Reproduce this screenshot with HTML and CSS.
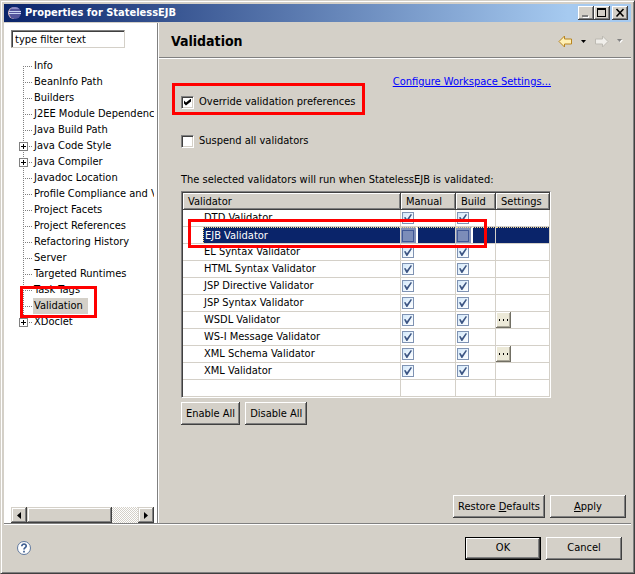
FILE: index.html
```html
<!DOCTYPE html>
<html lang="en">
<head>
  <meta charset="UTF-8">
  <meta name="viewport" content="width=device-width, initial-scale=1.0">
  <title>Properties for StatelessEJB</title>
  <link rel="stylesheet" href="styles.css">
</head>
<body>
  <div class="window">
    <header class="titlebar">
      <svg class="app-icon" width="16" height="16" viewBox="0 0 16 16" aria-hidden="true">
        <path d="M8 2a6 6 0 0 0 0 12z" fill="#e0bfc4"/>
        <circle cx="9" cy="8" r="6" fill="#54559b"/>
        <path d="M4.500 4a6 6 0 0 1 9 0z" fill="#8c8cc6"/>
        <path d="M3 6.500h12M3 8.500h12" stroke="#c9d4f2"/>
      </svg>
      <span class="title">Properties for StatelessEJB</span>
      <div class="window-buttons">
        <button class="window-button" aria-label="Minimize"><svg width="12" height="10" shape-rendering="crispEdges"><path d="M3 8h6v2H3z" fill="#fff"/><path d="M2 7h6v2H2z" fill="#808080"/></svg></button>
        <button class="window-button" aria-label="Maximize"><svg width="12" height="10" shape-rendering="crispEdges"><path d="M1 0h9v9H1zM2 2v6h7V2z" fill-rule="evenodd"/></svg></button>
        <button class="window-button close" aria-label="Close"><svg width="12" height="10"><path d="M2.500 1l7 7.500M9.500 1l-7 7.500" stroke="#000" stroke-width="1.600"/></svg></button>
      </div>
    </header>

    <main class="main">
      <nav class="sidebar">
        <input class="filter" type="text" value="type filter text" aria-label="Filter">
        <ul class="tree">
          <li><span>Info</span></li>
          <li><span>BeanInfo Path</span></li>
          <li><span>Builders</span></li>
          <li><span>J2EE Module Dependenci</span></li>
          <li><span>Java Build Path</span></li>
          <li><button class="expand" aria-label="Expand Java Code Style"></button><span>Java Code Style</span></li>
          <li><button class="expand" aria-label="Expand Java Compiler"></button><span>Java Compiler</span></li>
          <li><span>Javadoc Location</span></li>
          <li><span>Profile Compliance and Va</span></li>
          <li><span>Project Facets</span></li>
          <li><span>Project References</span></li>
          <li><span>Refactoring History</span></li>
          <li><span>Server</span></li>
          <li><span>Targeted Runtimes</span></li>
          <li><span>Task Tags</span></li>
          <li class="selected"><span>Validation</span><i class="mark mark-tree"></i></li>
          <li><button class="expand" aria-label="Expand XDoclet"></button><span>XDoclet</span></li>
        </ul>
        <div class="scrollbar">
          <button class="scroll-arrow" aria-label="Scroll left"><svg width="4" height="7"><path d="M4 0v7L0 3.500z"/></svg></button>
          <div class="thumb"></div>
          <div class="track"></div>
          <button class="scroll-arrow" aria-label="Scroll right"><svg width="4" height="7"><path d="M0 0v7l4-3.500z"/></svg></button>
        </div>
      </nav>

      <section class="page">
        <div class="page-header">
          <h1>Validation</h1>
          <div class="history">
            <button aria-label="Back"><svg width="15" height="13" viewBox="0 0 15 13"><path d="M1 6.500L6.500 1v3H13.500v5H6.500v3z" fill="#fff0b5" stroke="#b9851f"/></svg></button>
            <button aria-label="Back history"><svg width="5" height="3"><path d="M0 0h5L2.500 3z"/></svg></button>
            <button aria-label="Forward" disabled><svg width="15" height="13" viewBox="0 0 15 13"><path d="M14 6.500L8.500 1v3H1.500v5H8.500v3z" fill="#f0eeea" stroke="#bdbab3"/></svg></button>
            <button aria-label="Forward history" disabled><svg width="6" height="4"><path d="M1 1h5L3.500 4z" fill="#fff"/><path d="M0 0h5L2.500 3z" fill="#808080"/></svg></button>
          </div>
        </div>

        <div class="content">
          <a class="configure" href="#">Configure Workspace Settings...</a>
          <div class="option override">
            <input type="checkbox" class="check" id="override" checked>
            <label for="override">Override validation preferences</label>
            <i class="mark mark-override"></i>
          </div>
          <div class="option">
            <input type="checkbox" class="check" id="suspend">
            <label for="suspend">Suspend all validators</label>
          </div>

          <p class="caption" id="caption">The selected validators will run when StatelessEJB is validated:</p>
          <div class="table-frame">
            <table aria-labelledby="caption">
              <thead>
                <tr><th>Validator</th><th class="col-manual">Manual</th><th class="col-build">Build</th><th class="col-settings">Settings</th></tr>
              </thead>
              <tbody>
                <tr><td>DTD Validator</td><td><input type="checkbox" aria-label="DTD manual" checked></td><td><input type="checkbox" aria-label="DTD build" checked></td><td></td></tr>
                <tr class="current"><td><span>EJB Validator</span><i class="mark mark-row"></i></td><td><input type="checkbox" aria-label="EJB manual"></td><td><input type="checkbox" aria-label="EJB build"></td><td></td></tr>
                <tr><td>EL Syntax Validator</td><td><input type="checkbox" aria-label="EL manual" checked></td><td><input type="checkbox" aria-label="EL build" checked></td><td></td></tr>
                <tr><td>HTML Syntax Validator</td><td><input type="checkbox" aria-label="HTML manual" checked></td><td><input type="checkbox" aria-label="HTML build" checked></td><td></td></tr>
                <tr><td>JSP Directive Validator</td><td><input type="checkbox" aria-label="JSP directive manual" checked></td><td><input type="checkbox" aria-label="JSP directive build" checked></td><td></td></tr>
                <tr><td>JSP Syntax Validator</td><td><input type="checkbox" aria-label="JSP syntax manual" checked></td><td><input type="checkbox" aria-label="JSP syntax build" checked></td><td></td></tr>
                <tr><td>WSDL Validator</td><td><input type="checkbox" aria-label="WSDL manual" checked></td><td><input type="checkbox" aria-label="WSDL build" checked></td><td class="settings"><button class="more" aria-label="WSDL settings"><svg width="9" height="2" shape-rendering="crispEdges"><path d="M0 0h1v2H0zM4 0h1v2H4zM8 0h1v2H8z"/></svg></button></td></tr>
                <tr><td>WS-I Message Validator</td><td><input type="checkbox" aria-label="WS-I manual" checked></td><td><input type="checkbox" aria-label="WS-I build" checked></td><td></td></tr>
                <tr><td>XML Schema Validator</td><td><input type="checkbox" aria-label="XML schema manual" checked></td><td><input type="checkbox" aria-label="XML schema build" checked></td><td class="settings"><button class="more" aria-label="XML schema settings"><svg width="9" height="2" shape-rendering="crispEdges"><path d="M0 0h1v2H0zM4 0h1v2H4zM8 0h1v2H8z"/></svg></button></td></tr>
                <tr><td>XML Validator</td><td><input type="checkbox" aria-label="XML manual" checked></td><td><input type="checkbox" aria-label="XML build" checked></td><td></td></tr>
                <tr><td></td><td></td><td></td><td></td></tr>
              </tbody>
            </table>
          </div>
          <div class="row">
            <button class="btn">Enable All</button>
            <button class="btn">Disable All</button>
          </div>
          <div class="row apply-row">
            <button class="btn"><span>Restore <u>D</u>efaults</span></button>
            <button class="btn wide"><span><u>A</u>pply</span></button>
          </div>
        </div>
      </section>
    </main>

    <footer class="footer">
      <button class="help" aria-label="Help">
        <svg width="16" height="16" viewBox="0 0 16 16"><circle cx="8" cy="8" r="6.500" fill="#fff" stroke="#60799f"/><path d="M5.800 6.200C5.800 3.200 10.400 3.400 10.200 6.100C10.100 7.600 8 7.700 8 9.500M8 10.800v1.700" fill="none" stroke="#3f5f91" stroke-width="1.700"/></svg>
      </button>
      <button class="btn wide default">OK</button>
      <button class="btn wide">Cancel</button>
    </footer>
  </div>
</body>
</html>
```

FILE: styles.css
```css
* {
  box-sizing: border-box;
}
body {
  margin: 0;
  background: #d4d0c8;
  color: #000;
  font-family: "DejaVu Sans Condensed", "DejaVu Sans", sans-serif;
  font-size: 11px;
  line-height: 16px;
}
button, input {
  font: inherit;
  color: inherit;
  margin: 0;
}
button {
  display: flex;
  align-items: center;
  justify-content: center;
  padding: 0;
  border: none;
  background: #d4d0c8;
  white-space: nowrap;
}
.window {
  display: flex;
  flex-direction: column;
  min-height: 100vh;
  padding: 2px;
  border: 1px solid #d4d0c8;
  border-right-color: #404040;
  border-bottom-color: #404040;
  box-shadow: inset 1px 1px #fff, inset -1px -1px #808080;
}

/* title bar */
.titlebar {
  display: flex;
  align-items: center;
  gap: 3px;
  height: 18px;
  margin: 1px 1px 0;
  padding: 0 3px 0 2px;
  background: linear-gradient(to right, #0a246a, #a6caf0 90%);
  color: #fff;
  font-weight: bold;
}
.title {
  flex: 1;
}
.window-buttons {
  display: flex;
}
.window-button {
  width: 16px;
  height: 14px;
  box-shadow: inset -1px -1px #404040, inset 1px 1px #fff, inset -2px -2px #808080;
}
.close {
  margin-left: 2px;
}

/* tree */
.main {
  flex: 1;
  display: flex;
  margin: 1px 1px 0;
  border-bottom: 1px solid #808080;
}
.sidebar {
  display: flex;
  flex-direction: column;
  flex: 0 0 154px;
  min-width: 0;
  padding: 7px 3px 0 7px;
  background: #fff;
  border-right: 1px solid #808080;
}
.filter {
  width: 114px;
  height: 18px;
  padding: 0 3px;
  border: 1px solid #808080;
  border-right-color: #d4d0c8;
  border-bottom-color: #d4d0c8;
  box-shadow: inset 1px 1px #404040;
  background: #fff;
}
.tree {
  flex: 1;
  margin: 10px 0 0;
  padding: 0;
  list-style: none;
  overflow: hidden;
}
.tree li {
  position: relative;
  display: flex;
  align-items: center;
  height: 16px;
  padding-left: 22px;
  white-space: nowrap;
}
.tree li::before {
  content: "";
  position: absolute;
  left: 12px;
  top: 0;
  bottom: 0;
  width: 1px;
  background: repeating-linear-gradient(#808080 0 1px, #fff 1px 2px);
}
.tree li:first-child::before {
  top: 8px;
}
.tree li:last-child::before {
  bottom: 8px;
}
.tree li::after {
  content: "";
  position: absolute;
  left: 14px;
  top: 8px;
  width: 7px;
  height: 1px;
  background: repeating-linear-gradient(to right, #808080 0 1px, #fff 1px 2px);
}
.tree span {
  padding: 0 1px;
}
.tree .selected span {
  padding-right: 5px;
  background: #d4d0c8;
}
.expand {
  position: absolute;
  z-index: 1;
  left: 8px;
  top: 4px;
  width: 9px;
  height: 9px;
  border: 1px solid #808080;
  background:
    linear-gradient(#000, #000) center / 5px 1px no-repeat,
    linear-gradient(#000, #000) center / 1px 5px no-repeat,
    #fff;
}
.scrollbar {
  display: flex;
  height: 16px;
}
.scroll-arrow {
  flex: 0 0 16px;
}
.scroll-arrow, .thumb {
  box-shadow: inset -1px -1px #404040, inset 1px 1px #d4d0c8, inset -2px -2px #808080, inset 2px 2px #fff;
}
.thumb {
  flex: 10;
  background: #d4d0c8;
}
.track {
  flex: 3;
  background: repeating-conic-gradient(#d4d0c8 0 25%, #fff 0 50%) 0 0 / 2px 2px;
}

/* property page */
.page {
  flex: 1;
  display: flex;
  flex-direction: column;
  border-left: 1px solid #fff;
}
.page-header {
  display: flex;
  align-items: center;
  justify-content: space-between;
  height: 35px;
  padding: 2px 8px 0 12px;
  border-bottom: 1px solid #808080;
  box-shadow: 0 1px #fff;
}
h1 {
  margin: 0;
  font-size: 14px;
}
.history {
  display: flex;
  align-items: center;
  gap: 8px;
}
.content {
  flex: 1;
  display: flex;
  flex-direction: column;
  padding: 16px 5px 5px 22px;
}
.configure {
  align-self: flex-end;
  margin-right: 75px;
  color: #00f;
}
.option {
  position: relative;
  display: flex;
  align-items: center;
  align-self: flex-start;
  gap: 5px;
  margin-bottom: 23px;
}
.override {
  margin-top: 4px;
}
.check {
  appearance: none;
  position: relative;
  width: 13px;
  height: 13px;
  border: 1px solid #808080;
  border-right-color: #fff;
  border-bottom-color: #fff;
  box-shadow: inset 1px 1px #404040, inset -1px -1px #d4d0c8;
  background: #fff;
}
.check:checked::before {
  content: "";
  position: absolute;
  left: 2px;
  top: 2px;
  width: 7px;
  height: 7px;
  background: #000;
  clip-path: polygon(0 30%, 28% 57%, 100% 0, 100% 42%, 28% 100%, 0 72%);
}
.caption {
  margin: 0 0 3px;
}
.table-frame {
  margin-right: 75px;
  border: 1px solid #808080;
  border-right-color: #fff;
  border-bottom-color: #fff;
  background: #fff;
  box-shadow: inset 1px 1px #404040;
  padding: 1px 0 0 1px;
}
table {
  width: 100%;
  table-layout: fixed;
  border-collapse: separate;
  border-spacing: 0;
}
th {
  height: 17px;
  padding: 0 5px;
  background: #d4d0c8;
  border-bottom: 1px solid #404040;
  box-shadow: inset -1px 0 #404040, inset 1px 1px #fff, inset -2px -1px #808080;
  font-weight: normal;
  line-height: 15px;
  text-align: left;
}
.col-manual {
  width: 55px;
}
.col-build {
  width: 40px;
}
.col-settings {
  width: 54px;
}
td {
  height: 17px;
  padding: 0 0 0 1px;
  border-right: 1px solid #d4d0c8;
  border-bottom: 1px solid #d4d0c8;
}
td:first-child {
  position: relative;
  padding-left: 21px;
}
td input {
  appearance: none;
  position: relative;
  display: block;
  width: 12px;
  height: 12px;
  border: 1px solid #7f93b3;
  background: linear-gradient(135deg, #d3e8fa, #fff);
}
td input:checked::before {
  content: "";
  position: absolute;
  left: 1px;
  top: 1px;
  width: 8px;
  height: 8px;
  background: #3d5684;
  clip-path: polygon(0 45%, 18% 38%, 37% 65%, 85% 0, 100% 10%, 42% 100%, 30% 100%);
}
.current td {
  background: #0a246a;
}
.current td:first-child {
  padding-left: 20px;
  background: linear-gradient(to right, #fff 20px, #0a246a 20px);
}
.current td:nth-child(2), .current td:nth-child(3) {
  background: linear-gradient(to right, #8190b8 15px, #fff 15px, #fff 17px, #0a246a 17px);
}
.current input {
  border-color: #405896;
  background: #7c8db9;
}
.current span {
  display: block;
  height: 16px;
  padding-left: 1px;
  border-left: 1px dotted #ffd77a;
  line-height: 15px;
  color: #fff;
}
.current td:not(:first-child), .current span {
  border-top: 1px dotted #f5db95;
}

/* buttons */
.more {
  width: 15px;
  height: 16px;
  background: #ece9d8;
  box-shadow: inset -1px -1px #716f64, inset 1px 1px #fff, inset -2px -2px #aca899;
}
td.settings {
  padding: 0;
}
.row {
  display: flex;
  gap: 5px;
  margin-top: 4px;
}
.apply-row {
  margin-top: auto;
  justify-content: flex-end;
}
.btn {
  height: 23px;
  padding: 0 5px;
  box-shadow: inset -1px -1px #404040, inset 1px 1px #fff, inset -2px -2px #808080;
}
.wide {
  width: 76px;
}
.default {
  border: 1px solid #000;
}
.footer {
  display: flex;
  align-items: center;
  gap: 5px;
  height: 47px;
  margin: 0 1px;
  padding: 0 9px 0 12px;
  border-top: 1px solid #fff;
}
.help {
  margin-right: auto;
}

/* red highlight frames */
.mark {
  position: absolute;
  z-index: 2;
  border: 3px solid #f00;
  pointer-events: none;
}
.mark-tree {
  left: 9px;
  top: -12px;
  width: 77px;
  height: 32px;
}
.mark-override {
  inset: -11px -10px -5px -9px;
}
.mark-row {
  left: 5px;
  top: -8px;
  width: 299px;
  height: 29px;
}
```
